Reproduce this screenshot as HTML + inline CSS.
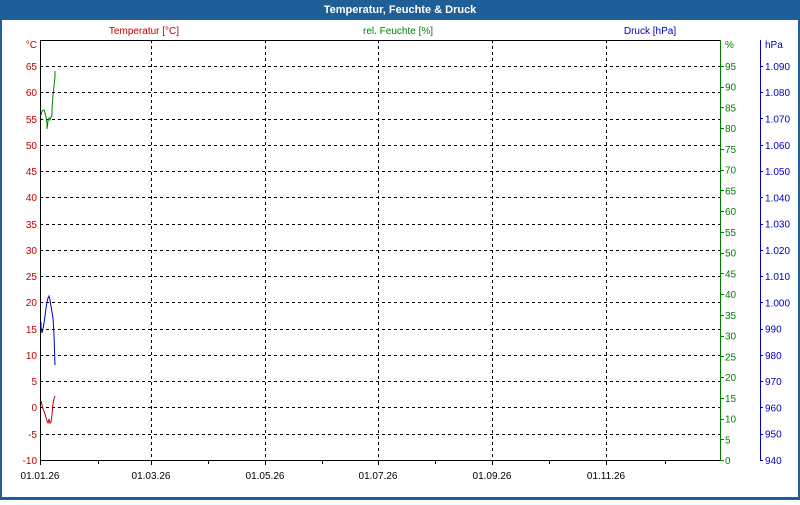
<!DOCTYPE html>
<html><head><style>
body{margin:0;width:800px;height:500px;overflow:hidden;background:#fff;font-family:"Liberation Sans","DejaVu Sans",sans-serif}
</style></head><body>
<svg width="800" height="500" xmlns="http://www.w3.org/2000/svg" font-family="Liberation Sans, DejaVu Sans, sans-serif" font-size="10">
<rect x="0" y="0" width="800" height="500" fill="#1e5f97"/>
<rect x="2" y="20" width="796" height="477" fill="#fff"/>
<text x="400" y="13" fill="#fff" font-weight="bold" font-size="11" text-anchor="middle">Temperatur, Feuchte &amp; Druck</text>
<text x="144" y="34" fill="#c00000" text-anchor="middle">Temperatur [°C]</text>
<text x="398" y="34" fill="#008000" text-anchor="middle">rel. Feuchte [%]</text>
<text x="650" y="34" fill="#0000c0" text-anchor="middle">Druck [hPa]</text>
<g stroke="#000" stroke-dasharray="3,3" stroke-width="1">
<path d="M40 66.5H720M40 92.5H720M40 119.5H720M40 145.5H720M40 171.5H720M40 197.5H720M40 224.5H720M40 250.5H720M40 276.5H720M40 302.5H720M40 329.5H720M40 355.5H720M40 381.5H720M40 407.5H720M40 434.5H720"/>
<path d="M151.5 40V460M265.5 40V460M378.5 40V460M492.5 40V460M606.5 40V460"/>
</g>
<g stroke="#000" fill="none">
<path d="M40.5 40.5H720.5M40.5 40V460.5H720"/>
<path d="M40.5 460v5M98.5 460v4M151.5 460v5M208.5 460v4M265.5 460v5M322.5 460v4M378.5 460v5M435.5 460v4M492.5 460v5M549.5 460v4M606.5 460v5M665.5 460v4"/>
</g>
<g fill="#000" text-anchor="middle">
<text x="40" y="479">01.01.26</text><text x="151" y="479">01.03.26</text><text x="265" y="479">01.05.26</text><text x="378" y="479">01.07.26</text><text x="492" y="479">01.09.26</text><text x="606" y="479">01.11.26</text>
</g>
<g fill="#c00000" text-anchor="end">
<text x="37" y="48">°C</text>
<text x="37" y="70">65</text><text x="37" y="96">60</text><text x="37" y="123">55</text><text x="37" y="149">50</text><text x="37" y="175">45</text><text x="37" y="201">40</text><text x="37" y="228">35</text><text x="37" y="254">30</text><text x="37" y="280">25</text><text x="37" y="306">20</text><text x="37" y="333">15</text><text x="37" y="359">10</text><text x="37" y="385">5</text><text x="37" y="411">0</text><text x="37" y="438">-5</text><text x="37" y="464">-10</text>
</g>
<path d="M720.5 40V460" stroke="#008000"/>
<g stroke="#008000" id="gt"></g>
<g fill="#008000" id="gl"><text x="725" y="48">%</text></g>
<path d="M760.5 40V460" stroke="#0000c0"/>
<g fill="#0000c0" id="bl"><text x="765" y="48">hPa</text></g>
<g id="bt" stroke="#0000c0"></g>
<polyline fill="none" stroke="#008000" points="41,115 42,111 44,110 45,113 46,117 47,123 47,129 48,121 49,118 50,120 51,117 52,115 52,108 53,96 54,86 55,77 55,71"/>
<polyline fill="none" stroke="#0000c0" points="41,322 41,327 42,333 43,329 44,323 45,316 46,308 47,302 48,298 49,296 50,300 51,306 53,318 54,335 55,365"/>
<polyline fill="none" stroke="#c00000" points="41,401 42,405 43,409 44,411 45,414 47,421 48,423 49,419 50,423 51,422 52,415 53,404 54,399 55,396"/>
</svg>
<script>
var ns="http://www.w3.org/2000/svg";
function el(p,t,a,txt){var e=document.createElementNS(ns,t);for(var k in a)e.setAttribute(k,a[k]);if(txt!=null)e.textContent=txt;document.getElementById(p).appendChild(e);}
for(var i=0;i<=19;i++){var y=460-i*20.74;el('gt','line',{x1:720,x2:724,y1:Math.round(y)+.5,y2:Math.round(y)+.5});el('gl','text',{x:725,y:y+4},String(i*5));}
for(var i=0;i<=15;i++){var y=460-i*26.27;el('bt','line',{x1:760,x2:763,y1:Math.round(y)+.5,y2:Math.round(y)+.5});var v=940+i*10;var s=v>=1000?("1."+String(v-1000).padStart(3,"0")):String(v);el('bl','text',{x:765,y:y+4},s);}
</script>
</body></html>
